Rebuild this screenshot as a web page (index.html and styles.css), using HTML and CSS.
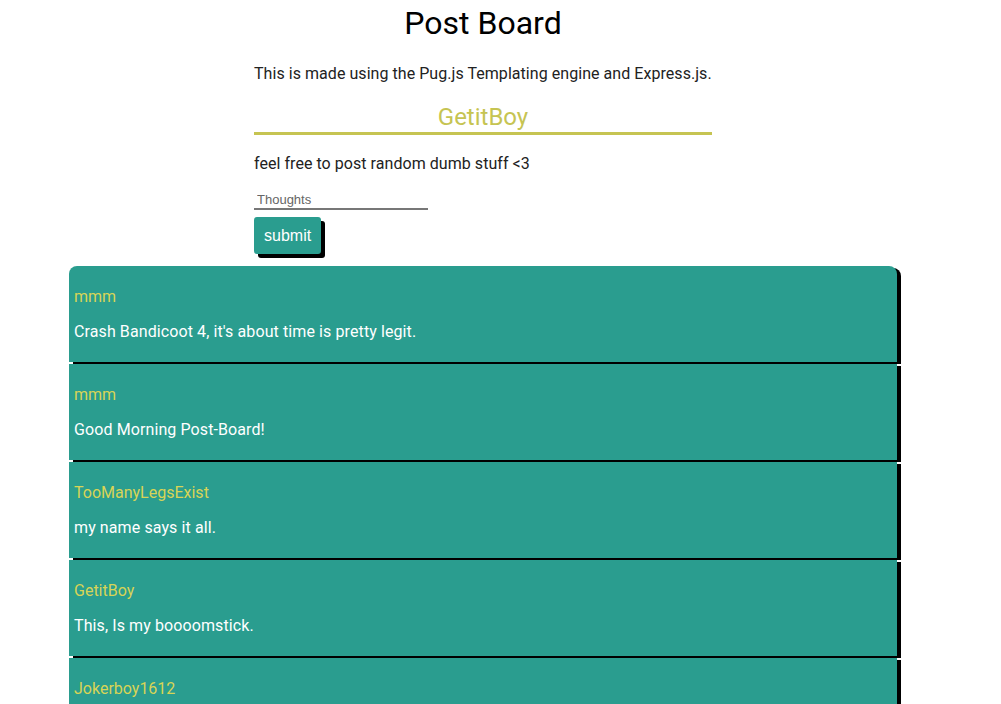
FILE: index.html
```html
<!DOCTYPE html>
<html>
<head>
<meta charset="utf-8">
<title>Post Board</title>
<link rel="stylesheet" href="styles.css">
</head>
<body>
<div class="page">
  <h1 class="title">Post Board</h1>
  <div class="intro">
    <p class="lead">This is made using the Pug.js Templating engine and Express.js.</p>
    <h2 class="user">GetitBoy</h2>
    <p class="lead note">feel free to post random dumb stuff &lt;3</p>
    <form class="post-form">
      <input class="thought" type="text" placeholder="Thoughts">
      <button class="submit" type="button">submit</button>
    </form>
  </div>
  <div class="posts">
    <div class="post first">
      <p class="author">mmm</p>
      <p class="message">Crash Bandicoot 4, it's about time is pretty legit.</p>
    </div>
    <div class="post">
      <p class="author">mmm</p>
      <p class="message">Good Morning Post-Board!</p>
    </div>
    <div class="post">
      <p class="author">TooManyLegsExist</p>
      <p class="message">my name says it all.</p>
    </div>
    <div class="post">
      <p class="author">GetitBoy</p>
      <p class="message">This, Is my boooomstick.</p>
    </div>
    <div class="post">
      <p class="author">Jokerboy1612</p>
      <p class="message">Why so serious?</p>
    </div>
  </div>
</div>
</body>
</html>
```

FILE: styles.css
```css
html, body {
  margin: 0;
  padding: 0;
  background: #ffffff;
}

body {
  font-family: Roboto, "Liberation Sans", sans-serif;
  color: #222222;
}

.page {
  width: 966px;
}

.title {
  margin: 0;
  font-size: 32px;
  font-weight: 400;
  line-height: 47px;
  text-align: center;
  color: #000000;
}

.intro {
  width: 458px;
  margin: 0 auto;
}

.lead {
  margin: 16px 0;
  font-size: 16px;
  line-height: 22px;
  letter-spacing: 0.05px;
  white-space: nowrap;
}

.note {
  margin-top: 19px;
}

.user {
  margin: 18px 0 0;
  font-size: 24px;
  font-weight: 400;
  line-height: 29px;
  text-align: center;
  color: #c6c452;
  border-bottom: 3px solid #c6c452;
}

.user + .note {
  margin-top: 18px;
}

.post-form {
  display: flex;
  flex-direction: column;
  align-items: flex-start;
  gap: 7px;
}

.thought {
  width: 174px;
  height: 19px;
  box-sizing: border-box;
  padding: 0 3px;
  border: none;
  border-bottom: 2px solid #777777;
  font-family: "Liberation Sans", Arial, sans-serif;
  font-size: 13px;
  outline: none;
}

.thought::placeholder {
  color: #666666;
}

.submit {
  height: 37px;
  padding: 0 10px;
  border: none;
  border-radius: 3px;
  background: #2a9d8f;
  color: #ffffff;
  font-family: "Liberation Sans", Arial, sans-serif;
  font-size: 16px;
  box-shadow: 4px 4px 0 #000000;
}

.posts {
  margin: 12px 69px 0;
  display: flex;
  flex-direction: column;
  gap: 2px;
}

.post {
  padding: 5px;
  background: #2a9d8f;
  box-shadow: 4px 2px 0 #000000;
}

.post.first {
  border-radius: 8px 8px 0 0;
}

.author {
  margin: 16px 0;
  font-size: 16px;
  line-height: 19px;
  color: #d8d456;
}

.message {
  margin: 16px 0;
  font-size: 16px;
  line-height: 19px;
  letter-spacing: 0.1px;
  color: #ffffff;
}
```
